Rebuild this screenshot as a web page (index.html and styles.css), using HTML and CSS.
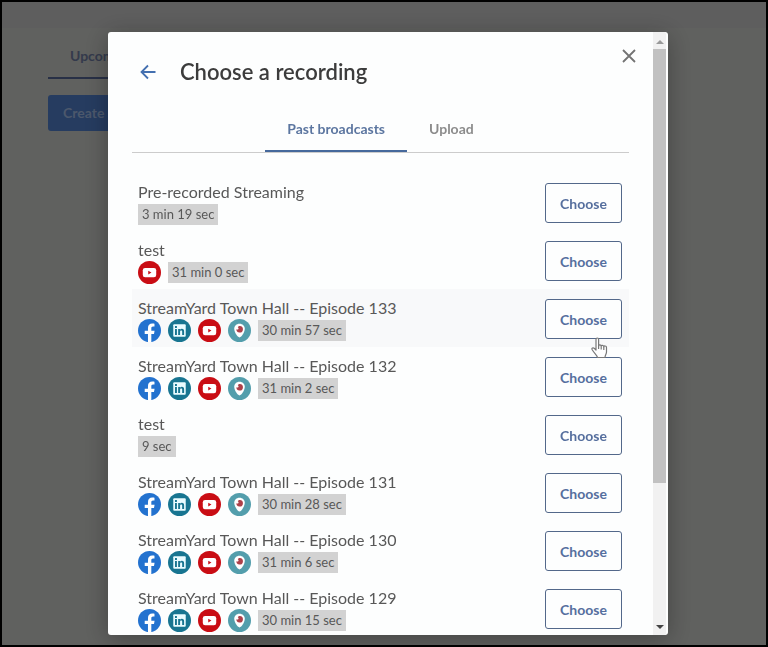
FILE: index.html
```
<!DOCTYPE html>
<html lang="en">
  <head>
    <meta charset="UTF-8" />
    <meta name="viewport" content="width=device-width, initial-scale=1.0" />
    <title>Choose a recording</title>
    <link rel="stylesheet" href="styles.css">
  </head>
  <body>
    <!-- shared icons -->
    <svg class="sprite" aria-hidden="true">
      <symbol id="facebook" viewBox="0 0 24 24">
        <circle cx="12" cy="12" r="12" fill="#2372cf" />
        <path fill="#fff" d="M10.400 24v-8.400H7v-3.400h3.400V9.600c0-3.200 1.700-4.800 4.500-4.800 1.200 0 2.300.2 2.300.2v2.900h-1.500c-1.400 0-1.800.8-1.800 1.700v2.600h3.400l-.6 3.400h-2.800V24z" />
      </symbol>
      <symbol id="linkedin" viewBox="0 0 24 24">
        <circle cx="12" cy="12" r="12" fill="#187591" />
        <rect x="5.500" y="5.500" width="13" height="13" rx="1" fill="#e9fbff" />
        <path fill="#187591" d="M7.300 10.400h2v6.200h-2zM7.300 7.400h2v1.900h-2zM10.600 10.400h1.900v.9c.4-.7 1.100-1.100 2-1.100 1.700 0 2.300 1.100 2.300 2.800v3.600h-2v-3.200c0-.9-.3-1.400-1-1.400-.8 0-1.200.5-1.200 1.400v3.200h-2z" />
      </symbol>
      <symbol id="youtube" viewBox="0 0 24 24">
        <circle cx="12" cy="12" r="12" fill="#c90d14" />
        <rect x="5" y="7.300" width="14" height="9.600" rx="2.400" fill="#fff" />
        <path fill="#c90d14" d="M10.700 10.100l3.300 2-3.300 2z" />
      </symbol>
      <symbol id="periscope" viewBox="0 0 24 24">
        <circle cx="12" cy="12" r="12" fill="#539eac" />
        <path fill="#fff" d="M12 5c3.200 0 5.500 2.300 5.500 5.300 0 3.500-3.400 8.900-5.500 8.900s-5.500-5.400-5.500-8.900C6.500 7.300 8.800 5 12 5z" />
        <path fill="#ad4049" d="M12.300 7.300a3.400 3.400 0 1 1-3.500 3.100c.7.900 2.200.6 2.200-.6 0-.6-.3-1-.8-1.200.6-.8 1.200-1.300 2.100-1.300z" />
      </symbol>
    </svg>

    <div class="page">
      <header class="topbar"></header>
      <main class="dashboard">
        <nav class="page-tabs">
          <a href="#" class="page-tab">Upcoming</a>
        </nav>
        <button type="button" class="create">Create a broadcast</button>
      </main>
    </div>

    <div class="overlay">
      <div class="modal" role="dialog" aria-labelledby="modal-title">
        <div class="modal-body">
          <header class="modal-header">
            <button type="button" class="icon-btn" aria-label="Back">
              <svg width="16" height="16" viewBox="0 0 16 16" fill="none" stroke="#4470b0" stroke-width="1.800"><path d="M15.500 8H2M8 1.500L1.500 8 8 14.500" /></svg>
            </button>
            <h1 id="modal-title">Choose a recording</h1>
          </header>
          <button type="button" class="icon-btn close" aria-label="Close">
            <svg width="14" height="14" viewBox="0 0 14 14" fill="none" stroke="#737373" stroke-width="1.800"><path d="M1 1l12 12M13 1L1 13" /></svg>
          </button>

          <div class="tabs">
            <button type="button" class="tab active">Past broadcasts</button>
            <button type="button" class="tab">Upload</button>
          </div>

          <ul class="recordings">
            <li class="recording">
              <div>
                <div class="name">Pre-recorded Streaming</div>
                <div class="meta"><span class="length">3 min 19 sec</span></div>
              </div>
              <button type="button" class="choose">Choose</button>
            </li>
            <li class="recording">
              <div>
                <div class="name">test</div>
                <div class="meta">
                  <svg class="site"><use href="#youtube" /></svg>
                  <span class="length">31 min 0 sec</span>
                </div>
              </div>
              <button type="button" class="choose">Choose</button>
            </li>
            <li class="recording hovered">
              <div>
                <div class="name">StreamYard Town Hall -- Episode 133</div>
                <div class="meta">
                  <svg class="site"><use href="#facebook" /></svg>
                  <svg class="site"><use href="#linkedin" /></svg>
                  <svg class="site"><use href="#youtube" /></svg>
                  <svg class="site"><use href="#periscope" /></svg>
                  <span class="length">30 min 57 sec</span>
                </div>
              </div>
              <button type="button" class="choose">Choose</button>
              <svg class="cursor" width="18" height="22" viewBox="0 0 18 22" fill="#fff" stroke="#777" stroke-width="1.200" stroke-linejoin="round">
                <path d="M5 13V2.500c0-2 2.600-2 2.600 0V9c0-1.500 2.600-1.500 2.600.3 0-1.500 2.600-1.300 2.600.5 0-1.200 2.700-1.200 2.700.6V15c0 2-1.500 3-1.500 5.500H6.500C6 18 3.500 16.500 1.200 12.800c-.9-1.600.8-2.600 2-1.500z" />
                <path d="M7.600 9v3M10.200 9.500v3M12.800 10v3" />
              </svg>
            </li>
            <li class="recording">
              <div>
                <div class="name">StreamYard Town Hall -- Episode 132</div>
                <div class="meta">
                  <svg class="site"><use href="#facebook" /></svg>
                  <svg class="site"><use href="#linkedin" /></svg>
                  <svg class="site"><use href="#youtube" /></svg>
                  <svg class="site"><use href="#periscope" /></svg>
                  <span class="length">31 min 2 sec</span>
                </div>
              </div>
              <button type="button" class="choose">Choose</button>
            </li>
            <li class="recording">
              <div>
                <div class="name">test</div>
                <div class="meta"><span class="length">9 sec</span></div>
              </div>
              <button type="button" class="choose">Choose</button>
            </li>
            <li class="recording">
              <div>
                <div class="name">StreamYard Town Hall -- Episode 131</div>
                <div class="meta">
                  <svg class="site"><use href="#facebook" /></svg>
                  <svg class="site"><use href="#linkedin" /></svg>
                  <svg class="site"><use href="#youtube" /></svg>
                  <svg class="site"><use href="#periscope" /></svg>
                  <span class="length">30 min 28 sec</span>
                </div>
              </div>
              <button type="button" class="choose">Choose</button>
            </li>
            <li class="recording">
              <div>
                <div class="name">StreamYard Town Hall -- Episode 130</div>
                <div class="meta">
                  <svg class="site"><use href="#facebook" /></svg>
                  <svg class="site"><use href="#linkedin" /></svg>
                  <svg class="site"><use href="#youtube" /></svg>
                  <svg class="site"><use href="#periscope" /></svg>
                  <span class="length">31 min 6 sec</span>
                </div>
              </div>
              <button type="button" class="choose">Choose</button>
            </li>
            <li class="recording">
              <div>
                <div class="name">StreamYard Town Hall -- Episode 129</div>
                <div class="meta">
                  <svg class="site"><use href="#facebook" /></svg>
                  <svg class="site"><use href="#linkedin" /></svg>
                  <svg class="site"><use href="#youtube" /></svg>
                  <svg class="site"><use href="#periscope" /></svg>
                  <span class="length">30 min 15 sec</span>
                </div>
              </div>
              <button type="button" class="choose">Choose</button>
            </li>
          </ul>
        </div>

        <div class="scrollbar" aria-hidden="true">
          <span class="arrow up"></span>
          <div class="track"><div class="thumb"></div></div>
          <span class="arrow down"></span>
        </div>
      </div>
    </div>
  </body>
</html>
```
FILE: styles.css
```
* {
  margin: 0;
  padding: 0;
  box-sizing: border-box;
}
body {
  font-family: Lato, "Liberation Sans", sans-serif;
  color: #585858;
}
button {
  font-family: inherit;
  background: none;
  border: none;
  cursor: pointer;
}
.sprite {
  display: none;
}

/* page behind the modal */
.page {
  height: 100vh;
  border: 2px solid black;
  background: #c0c2be;
}
.topbar {
  height: 26px;
  background: #bcbcbc;
}
.dashboard {
  padding: 15px 46px;
}
.page-tab {
  display: inline-block;
  padding: 4px 22px 12px;
  border-bottom: 2px solid #50608c;
  font-size: 14px;
  font-weight: bold;
  line-height: 18px;
  color: #687498;
  text-decoration: none;
}
.create {
  display: block;
  margin-top: 16px;
  padding: 0 15px;
  border-radius: 3px;
  background: #4c78c0;
  color: #98b0d8;
  font-size: 14px;
  font-weight: bold;
  line-height: 36px;
}

.overlay {
  position: fixed;
  inset: 2px;
  display: flex;
  justify-content: center;
  padding: 30px 0 10px 8px;
  background: rgba(0, 0, 0, 0.5);
}
.modal {
  display: flex;
  width: 560px;
  padding-right: 2px;
  border-radius: 3px;
  background: #fdfefe;
  box-shadow: 0 4px 24px rgba(0, 0, 0, 0.3);
  overflow: hidden;
}
.modal-body {
  position: relative;
  flex: 1;
  padding: 24px;
}
.modal-header {
  display: flex;
  align-items: center;
  gap: 24px;
  height: 32px;
  padding-left: 8px;
}
h1 {
  font-size: 22px;
  font-weight: 600;
  line-height: 32px;
  color: #3c3c3c;
}
.icon-btn {
  display: flex;
}
.close {
  position: absolute;
  top: 17px;
  right: 17px;
}

.tabs {
  display: flex;
  justify-content: center;
  margin-top: 18px;
  border-bottom: 1px solid #ccc;
}
.tab {
  height: 46px;
  padding: 0 22px;
  border-bottom: 2px solid transparent;
  font-size: 14px;
  font-weight: bold;
  color: #8c8c8c;
}
.tab.active {
  border-color: #46699c;
  color: #5c76a0;
}

.recordings {
  margin-top: 20px;
  list-style: none;
}
.recording {
  position: relative;
  display: flex;
  justify-content: space-between;
  align-items: center;
  height: 58px;
  padding: 2px 7px 0 6px;
}
.hovered {
  background: #f8f9fa;
}
.name {
  font-size: 16px;
  line-height: 22px;
}
.meta {
  display: flex;
  align-items: center;
  gap: 7px;
  height: 23px;
}
.site {
  width: 23px;
  height: 23px;
}
.length {
  padding: 0 4px;
  background: #d2d2d2;
  font-size: 13px;
  line-height: 21px;
}
.choose {
  width: 77px;
  height: 40px;
  border: 1px solid #53688a;
  border-radius: 3px;
  background: #fdfefe;
  font-size: 14px;
  font-weight: bold;
  color: #566f9e;
}
.cursor {
  position: absolute;
  right: 20px;
  bottom: -12px;
  z-index: 1;
}

.scrollbar {
  display: flex;
  flex-direction: column;
  align-items: center;
  width: 13px;
  background: #f1f1f1;
}
.arrow {
  height: 8px;
  border: 4px solid transparent;
}
.up {
  margin: 4px 0 5px;
  border-bottom-color: #999;
}
.down {
  margin: 5px 0 2px;
  border-top-color: #444;
}
.track {
  flex: 1;
  width: 100%;
}
.thumb {
  height: 76%;
  background: #c1c1c1;
}
```
